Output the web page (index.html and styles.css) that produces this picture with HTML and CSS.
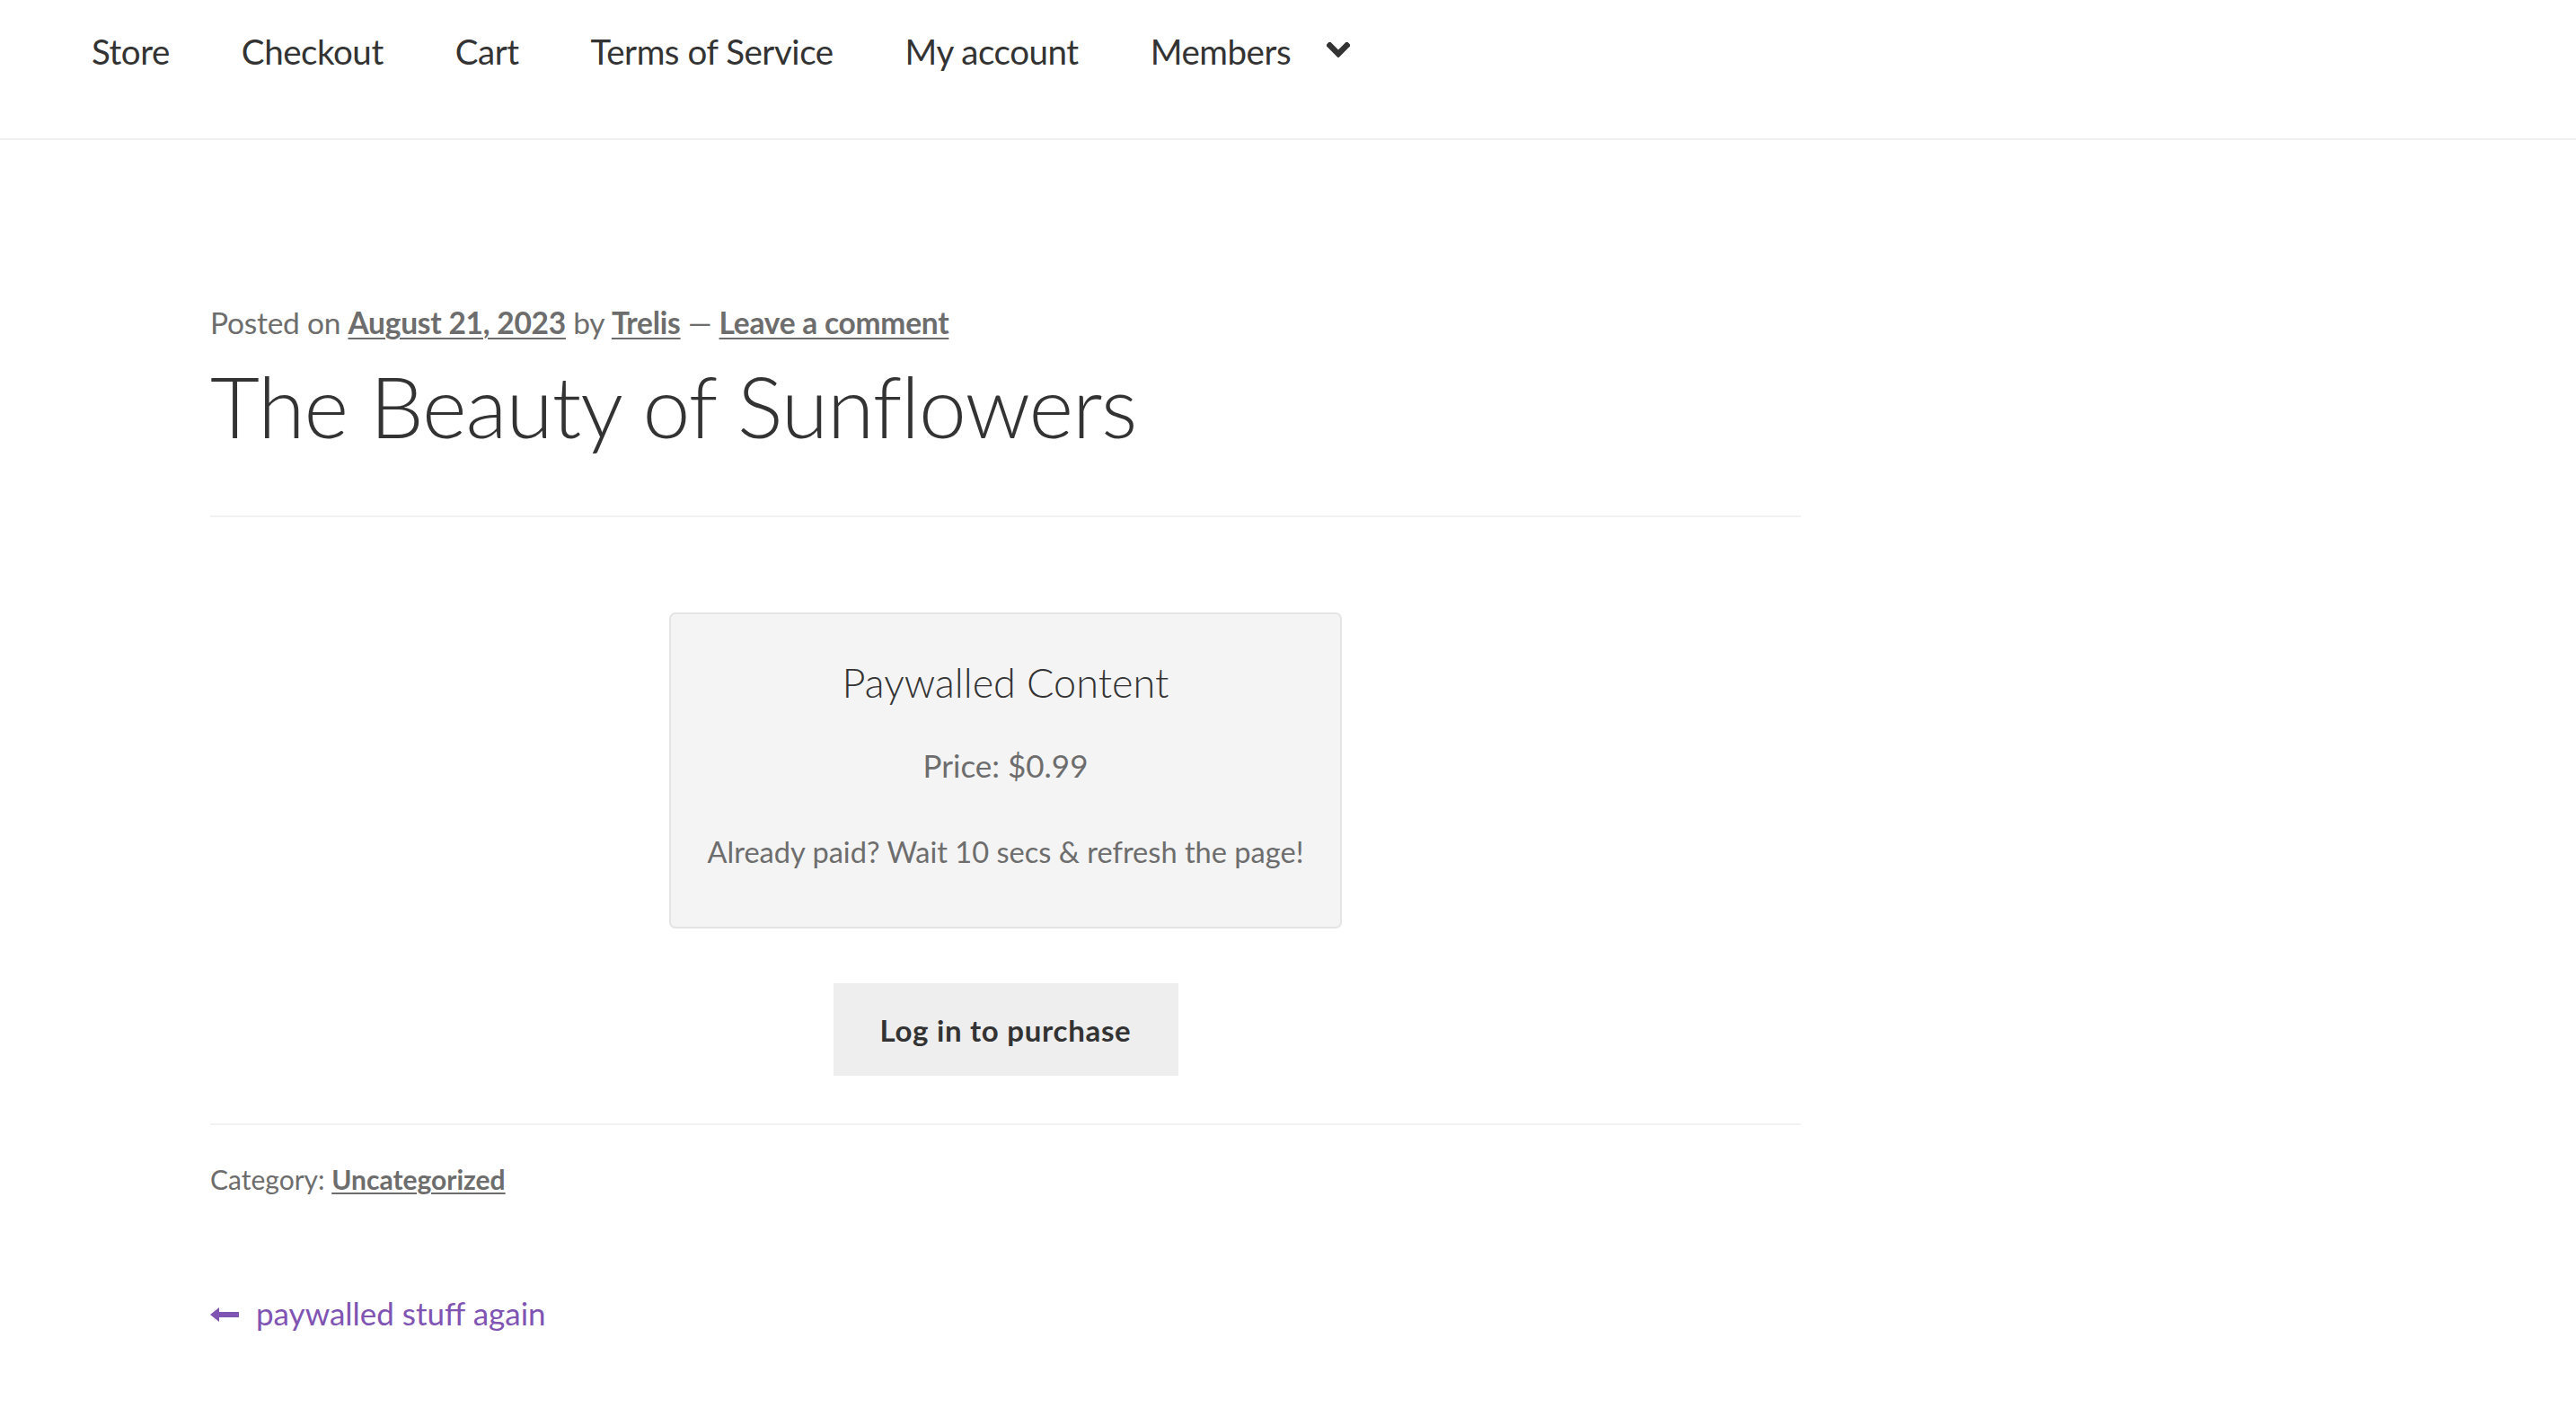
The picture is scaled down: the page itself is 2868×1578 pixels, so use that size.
FILE: index.html
```html
<!DOCTYPE html>
<html lang="en">
<head>
<meta charset="utf-8">
<title>The Beauty of Sunflowers</title>
<link rel="stylesheet" href="styles.css">
</head>
<body>
<header class="site-header">
  <nav class="main-nav">
    <ul class="menu">
      <li><a href="#">Store</a></li>
      <li><a href="#">Checkout</a></li>
      <li><a href="#">Cart</a></li>
      <li><a href="#">Terms of Service</a></li>
      <li><a href="#">My account</a></li>
      <li class="has-sub"><a href="#">Members</a>
        <svg class="chevron" viewBox="0 0 26 17" width="26" height="17" aria-hidden="true"><path d="M3.5 3.5 L13 13 L22.5 3.5" fill="none" stroke="#333" stroke-width="6.5" stroke-linecap="square" stroke-linejoin="miter"/></svg>
      </li>
    </ul>
  </nav>
</header>
<main class="content">
  <article class="post">
    <div class="posted-on">Posted on <a href="#">August 21, 2023</a> by <a href="#">Trelis</a> — <a href="#">Leave a comment</a></div>
    <h1 class="entry-title">The Beauty of Sunflowers</h1>
    <hr class="sep">
    <div class="paywall">
      <div class="paywall-box">
        <h2 class="pw-title">Paywalled Content</h2>
        <p class="pw-price">Price: $0.99</p>
        <p class="pw-note">Already paid? Wait 10 secs &amp; refresh the page!</p>
      </div>
      <a class="btn" href="#">Log in to purchase</a>
    </div>
    <hr class="sep sep-bottom">
    <div class="cat-links">Category: <a href="#">Uncategorized</a></div>
    <nav class="post-nav">
      <a href="#" class="prev">
        <svg class="arrow" viewBox="0 0 32 16" width="32" height="16" aria-hidden="true"><path d="M0 8 L10 0 L10 5 L32 5 L32 11 L10 11 L10 16 Z" fill="#7f54b3"/></svg>
        <span>paywalled stuff again</span>
      </a>
    </nav>
  </article>
</main>
</body>
</html>
```
FILE: styles.css
```css
html, body {
  margin: 0;
  padding: 0;
  background: #ffffff;
}
body {
  font-family: Lato, "Liberation Sans", sans-serif;
  color: #333333;
}
a { color: inherit; }

.site-header {
  height: 154px;
  border-bottom: 2px solid #f0f0f0;
  box-sizing: content-box;
}
.main-nav {
  padding-top: 34px;
  padding-left: 62px;
}
.menu {
  display: flex;
  list-style: none;
  margin: 0;
  padding: 0;
}
.menu li {
  display: flex;
  align-items: flex-start;
}
.menu a {
  display: block;
  padding: 0 40px;
  font-size: 38.5px;
  letter-spacing: -0.45px;
  line-height: 1.2;
  color: #333333;
  text-decoration: none;
}
.chevron {
  margin-top: 13px;
}

.content {
  padding: 0 234px;
  width: 1771px;
}
.post {
  display: flex;
  flex-direction: column;
}
.posted-on {
  margin-top: 183px;
  font-size: 33.5px;
  letter-spacing: -0.25px;
  line-height: 1.2;
  color: #6d6d6d;
}
.posted-on a {
  font-weight: 700;
  color: #6d6d6d;
  text-decoration-thickness: 2px;
  text-underline-offset: 4px;
}
.entry-title {
  margin: 15px 0 0;
  font-size: 95px;
  letter-spacing: -1px;
  font-weight: 300;
  line-height: 1.2;
  color: #333333;
}
.sep {
  border: 0;
  height: 2px;
  background: #f2f2f2;
  margin: 66px 0 0;
}
.paywall {
  display: flex;
  flex-direction: column;
  align-items: center;
  margin-top: 106px;
}
.paywall-box {
  width: 749px;
  box-sizing: border-box;
  height: 352px;
  border: 2px solid #e4e4e4;
  border-radius: 7px;
  background: #f4f4f4;
  text-align: center;
  padding-top: 49px;
}
.pw-title {
  margin: 0;
  font-size: 45px;
  font-weight: 300;
  line-height: 1.2;
  color: #333333;
}
.pw-price {
  margin: 44px 0 0;
  font-size: 35px;
  line-height: 1.2;
  color: #6d6d6d;
}
.pw-note {
  margin: 56px 0 0;
  font-size: 32.6px;
  line-height: 1.2;
  color: #6d6d6d;
}
.btn {
  margin-top: 61px;
  display: flex;
  align-items: center;
  justify-content: center;
  width: 384px;
  height: 103px;
  background: #eeeeee;
  color: #333333;
  font-size: 33px;
  letter-spacing: 0.7px;
  font-weight: 700;
  text-decoration: none;
}
.sep-bottom {
  margin-top: 53px;
}
.cat-links {
  margin-top: 42px;
  font-size: 30px;
  line-height: 1.2;
  color: #6d6d6d;
}
.cat-links a {
  font-weight: 700;
  color: #6d6d6d;
  text-decoration-thickness: 2px;
  text-underline-offset: 3px;
}
.post-nav {
  margin-top: 110px;
}
.prev {
  display: inline-flex;
  align-items: center;
  gap: 19px;
  font-size: 35px;
  line-height: 1.2;
  color: #7f54b3;
  text-decoration: none;
}
.arrow {
  margin-top: 4px;
}
```
